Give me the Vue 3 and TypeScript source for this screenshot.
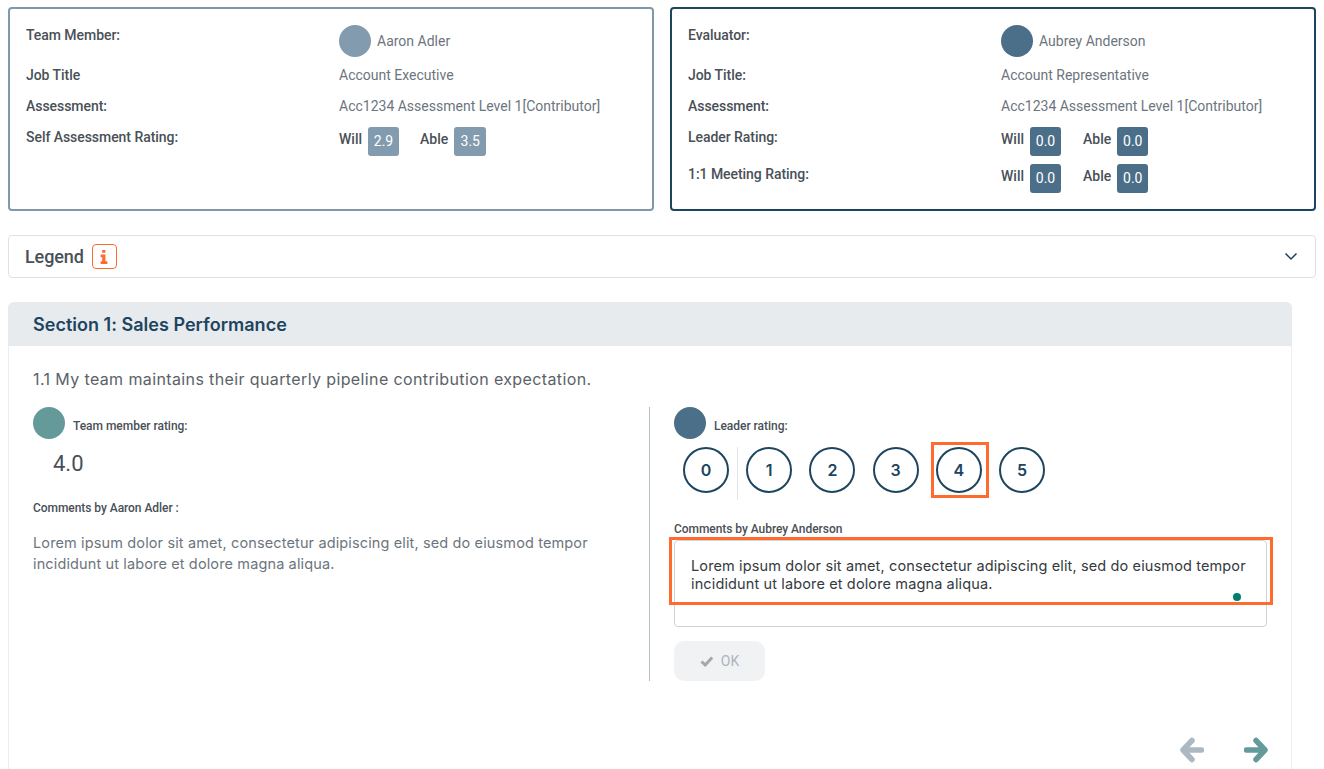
<script setup lang="ts">
interface Row { label: string; value?: string; ratings?: [string, string]; }
const left: Row[] = [
  { label: 'Job Title', value: 'Account Executive' },
  { label: 'Assessment:', value: 'Acc1234 Assessment Level 1[Contributor]' },
  { label: 'Self Assessment Rating:', ratings: ['2.9', '3.5'] },
];
const right: Row[] = [
  { label: 'Job Title:', value: 'Account Representative' },
  { label: 'Assessment:', value: 'Acc1234 Assessment Level 1[Contributor]' },
  { label: 'Leader Rating:', ratings: ['0.0', '0.0'] },
  { label: '1:1 Meeting Rating:', ratings: ['0.0', '0.0'] },
];
const cards = [
  { cls: 'member', head: 'Team Member:', name: 'Aaron Adler', rows: left },
  { cls: 'evaluator', head: 'Evaluator:', name: 'Aubrey Anderson', rows: right },
];
const scale = [0, 1, 2, 3, 4, 5];
const lorem = 'Lorem ipsum dolor sit amet, consectetur adipiscing elit, sed do eiusmod tempor incididunt ut labore et dolore magna aliqua.';
</script>

<template>
  <div class="page">
    <div class="cards">
      <section v-for="c in cards" :key="c.cls" class="card" :class="c.cls">
        <div class="row head">
          <div class="lab">{{ c.head }}</div>
          <div class="person"><span class="avatar"></span><span class="val">{{ c.name }}</span></div>
        </div>
        <div v-for="r in c.rows" :key="r.label" class="row" :class="{ rate: r.ratings }">
          <div class="lab">{{ r.label }}</div>
          <div v-if="r.value" class="val">{{ r.value }}</div>
          <div v-else-if="r.ratings" class="ratings">
            <b class="lab">Will</b><span class="badge">{{ r.ratings[0] }}</span>
            <b class="lab able">Able</b><span class="badge">{{ r.ratings[1] }}</span>
          </div>
        </div>
      </section>
    </div>

    <div class="legend">
      <span class="legend-t">Legend</span>
      <span class="info">
        <svg width="8" height="14" viewBox="0 0 8 14"><path fill="#ff6a2f" d="M2.200 0h3.200v2.800H2.200zM.6 4.400h4.800v6.800H7.400V14H.6v-2.800h1.600V7.200H.6z"/></svg>
      </span>
      <svg class="chev" width="14" height="9" viewBox="0 0 14 9"><path d="M1.500 1.500 7 7l5.500-5.500" fill="none" stroke="#1d4560" stroke-width="1.500"/></svg>
    </div>

    <section class="sec">
      <h2 class="sec-h">Section 1: Sales Performance</h2>
      <div class="sec-b">
        <p class="q">1.1 My team maintains their quarterly pipeline contribution expectation.</p>
        <div class="cols">
          <div class="col-l">
            <div class="who"><span class="avatar teal"></span><span class="who-t">Team member rating:</span></div>
            <div class="score">4.0</div>
            <div class="cm-l">Comments by Aaron Adler :</div>
            <p class="cm">{{ lorem }}</p>
          </div>
          <div class="col-r">
            <div class="who"><span class="avatar dark"></span><span class="who-t">Leader rating:</span></div>
            <div class="scale">
              <span v-for="n in scale" :key="n" class="num-w" :class="{ zero: n === 0, hl: n === 4 }">
                <span class="num">{{ n }}</span>
              </span>
            </div>
            <div class="cm-l2">Comments by Aubrey Anderson</div>
            <div class="ta">
              <p class="ta-t">{{ lorem }}</p>
              <i class="ta-hl"></i>
              <i class="dot"></i>
            </div>
            <div class="ok">
              <svg width="14" height="11" viewBox="0 0 14 11"><path d="M1.500 5.500 5.200 9l7-7.500" fill="none" stroke="#a3a8ad" stroke-width="3"/></svg>
              <span>OK</span>
            </div>
          </div>
        </div>
        <div class="nav">
          <svg width="24" height="26" viewBox="0 0 24 26"><path d="M21.500 13H5M12 3.500 3 13l9 9.500" fill="none" stroke="#aeb8c2" stroke-width="5.500" stroke-linecap="round" stroke-linejoin="round"/></svg>
          <svg width="24" height="26" viewBox="0 0 24 26"><path d="M2.500 13H19M12 3.500 21 13l-9 9.500" fill="none" stroke="#659a9a" stroke-width="5.500" stroke-linecap="round" stroke-linejoin="round"/></svg>
        </div>
      </div>
    </section>
  </div>
</template>

<style>
html, body { margin: 0; background: #fff; overflow: hidden; }
</style>

<style scoped>
.page { height: 769px; overflow: hidden; padding: 7px 8px 0; box-sizing: border-box; font-family: Roboto, sans-serif; color: #495057; font-size: 14px; }
.cards { display: grid; grid-template-columns: 646px 646px; gap: 16px; }
.card { height: 204px; box-sizing: border-box; border: 2px solid #7f98aa; border-radius: 4px; padding: 16px 16px 0; }
.card.evaluator { border-color: #1d4560; }
.row { display: grid; grid-template-columns: 313px 1fr; align-items: center; height: 34px; }
.row.head { height: 36px; align-items: start; }
.row.head .lab { line-height: 20px; }
.row.head + .row { height: 28px; }
.row.rate { height: 37px; align-items: start; padding-top: 4px; box-sizing: border-box; }
.row.rate > .lab { line-height: 20px; }
.lab { font-weight: 500; color: #495057; font-size: 14px; letter-spacing: -0.05px; }
.val { color: #6c757d; font-size: 14px; }
.person { display: flex; align-items: center; gap: 6px; }
.avatar { display: block; width: 32px; height: 32px; border-radius: 50%; background: #839bae; flex: none; }
.evaluator .avatar, .avatar.dark { background: #4c6f89; }
.avatar.teal { background: #659a9a; }
.ratings { display: flex; align-items: flex-start; }
.ratings .lab { line-height: 22px; margin-right: 6px; margin-top: 1px; letter-spacing: 0; }
.ratings .able { margin-left: 21px; margin-right: 6px; }
.evaluator .ratings .able { margin-left: 22px; }
.badge { height: 29px; width: 31px; line-height: 29px; text-align: center; background: #839bae; color: #fff; border-radius: 3px; }
.member .badge:last-child { width: 32px; }
.evaluator .badge { background: #4c6f89; }
.legend { margin-top: 24px; height: 43px; box-sizing: border-box; border: 1px solid #dee2e6; border-radius: 4px; display: flex; align-items: center; padding: 0 17px 0 16px; }
.legend-t { font-size: 18px; font-weight: 500; color: #495057; letter-spacing: -0.1px; }
.info { margin-left: 8px; width: 25px; height: 25px; box-sizing: border-box; border: 1px solid #ff6a2f; border-radius: 4px; display: flex; align-items: center; justify-content: center; }
.chev { margin-left: auto; }
.sec { margin-top: 24px; width: 1284px; border: 1px solid #eceef0; border-top: 0; border-bottom: 0; box-sizing: border-box; height: 600px; border-radius: 6px 6px 0 0; }
.sec-h { margin: 0 -1px; height: 44px; line-height: 46px; background: #e8ebee; border-radius: 6px 6px 0 0; padding-left: 25px; font-family: Inter, sans-serif; font-size: 18px; font-weight: 600; color: #1d4560; letter-spacing: 0.02px; }
.sec-b { padding: 0 23px 0 24px; }
.q { margin: 22px 0 0; height: 22px; line-height: 22px; font-family: Inter, sans-serif; font-size: 16px; letter-spacing: 0.38px; color: #5a6268; }
.cols { display: grid; grid-template-columns: 617px 1fr; margin-top: 17px; }
.col-l { border-right: 1px solid #b5c1ca; height: 274px; }
.col-r { padding-left: 24px; }
.who { display: flex; align-items: flex-start; gap: 8px; height: 32px; }
.who-t { font-size: 12px; font-weight: 500; margin-top: 12px; line-height: 14px; color: #495057; letter-spacing: -0.03px; }
.score { font-size: 22px; margin: 12px 0 0 20px; line-height: 26px; color: #495057; }
.cm-l { font-size: 12px; font-weight: 500; margin-top: 24px; line-height: 14px; letter-spacing: -0.05px; }
.cm { margin: 17px 0 0; font-family: Inter, sans-serif; font-size: 14.500px; letter-spacing: 0.13px; line-height: 21px; color: #6c757d; width: 590px; }
.scale { display: flex; margin-top: 8px; padding-left: 9px; height: 53px; }
.num-w { position: relative; width: 63.200px; flex: none; }
.num-w.zero::after { content: ''; position: absolute; left: 54px; top: 0; height: 53px; border-left: 1px solid #e3e6e9; }
.num-w.hl::after { content: ''; position: absolute; left: -5px; top: -5px; width: 52px; height: 50px; border: 3px solid #ff6a2f; }
.num { display: block; box-sizing: border-box; width: 46px; height: 46px; border: 2px solid #1d4560; border-radius: 50%; text-align: center; line-height: 42px; font-family: Inter, sans-serif; font-weight: 600; font-size: 16px; color: #1d4560; }
.cm-l2 { font-size: 12px; font-weight: 500; margin-top: 22px; line-height: 14px; letter-spacing: -0.05px; }
.ta { position: relative; margin-top: 4px; width: 593px; height: 87px; box-sizing: border-box; border: 1px solid #ced4da; border-radius: 4px; }
.ta-t { margin: 16px 0 0 16px; font-family: Inter, sans-serif; font-size: 14.500px; letter-spacing: 0.13px; line-height: 18px; color: #343a40; width: 570px; }
.ta-hl { position: absolute; left: -6px; top: -4px; width: 598px; height: 62px; border: 3px solid #ff6a2f; }
.dot { position: absolute; left: 558px; top: 52px; width: 8px; height: 8px; border-radius: 50%; background: #00806c; }
.ok { margin-top: 14px; width: 91px; height: 40px; background: #f1f2f4; border-radius: 10px; display: flex; align-items: center; justify-content: center; gap: 7px; color: #adb5bd; font-size: 14px; }
.nav { display: flex; justify-content: flex-end; gap: 40px; margin-top: 56px; }
</style>
